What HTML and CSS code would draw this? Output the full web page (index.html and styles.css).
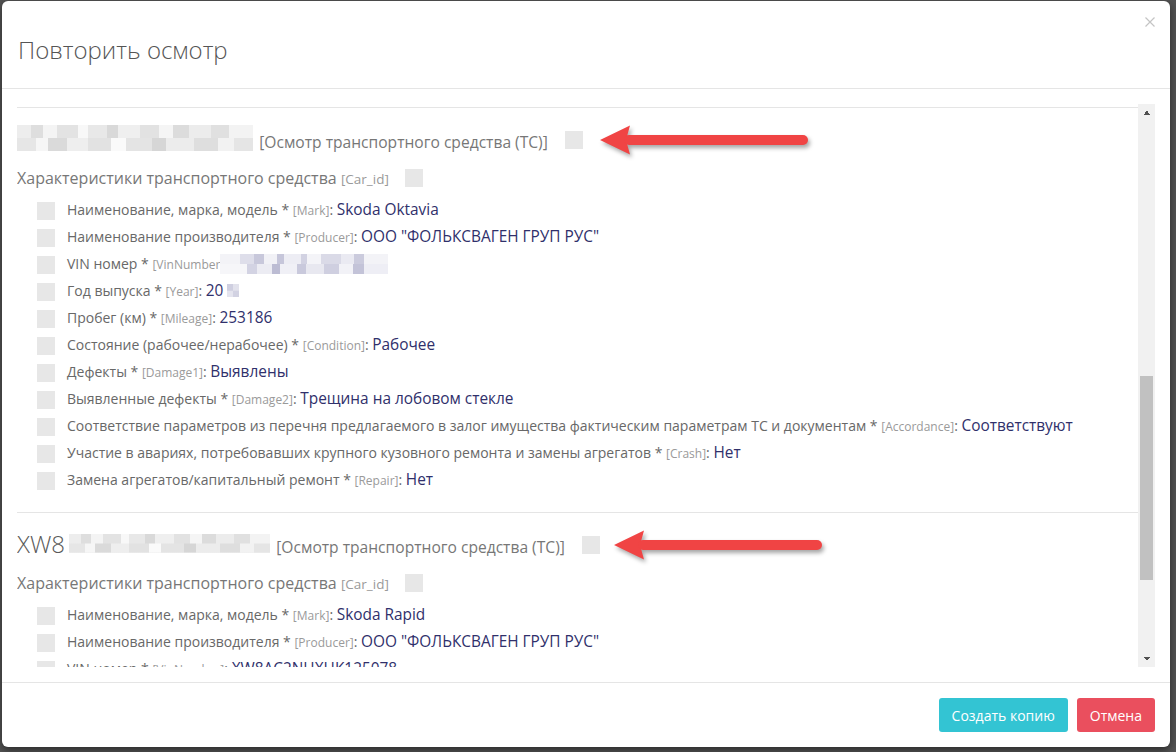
FILE: index.html
```html
<!DOCTYPE html>
<html lang="ru">
<head>
<meta charset="utf-8">
<title>Повторить осмотр</title>
<link rel="stylesheet" href="styles.css">
</head>
<body>
<div class="backdrop">
  <div class="modal">
    <div class="modal-header">
      <h4 class="modal-title">Повторить осмотр</h4>
      <button class="close" type="button" aria-label="Закрыть">
        <svg width="10" height="10" viewBox="0 0 10 10"><path d="M0.5 0.5L9.5 9.5M9.5 0.5L0.5 9.5" stroke="#c4c4c4" stroke-width="1.2" fill="none"/></svg>
      </button>
    </div>
    <div class="modal-body">
      <div class="scroll-area">
        <div class="viewport">
          <div class="block">
            <div class="block-title">
              <span class="title-text"><span class="mosaic m-name1"></span> <span class="kind">[Осмотр транспортного средства (ТС)]</span></span>
              <span class="cb cb-title"></span>
              <svg class="arrow" width="214" height="36" viewBox="0 0 214 36"><path d="M2 18L32 3.5L28 18L32 32.5Z" fill="#f04444"/><rect x="26" y="13" width="184" height="10" rx="5" fill="#f04444"/></svg>
            </div>
            <div class="group"><span class="group-name">Характеристики транспортного средства <span class="tag tag-group">[Car_id]</span></span><span class="cb cb-group"></span></div>
            <ul class="items">
              <li><span class="cb"></span><span class="label">Наименование, марка, модель * <span class="tag">[Mark]</span>: <span class="val">Skoda Oktavia</span></span></li>
              <li><span class="cb"></span><span class="label">Наименование производителя * <span class="tag">[Producer]</span>: <span class="val">ООО "ФОЛЬКСВАГЕН ГРУП РУС"</span></span></li>
              <li><span class="cb"></span><span class="label">VIN номер * <span class="tag">[VinNumber</span><span class="mosaic m-vin"></span></span></li>
              <li><span class="cb"></span><span class="label">Год выпуска * <span class="tag">[Year]</span>: <span class="val">20</span><span class="mosaic m-year"></span></span></li>
              <li><span class="cb"></span><span class="label">Пробег (км) * <span class="tag">[Mileage]</span>: <span class="val">253186</span></span></li>
              <li><span class="cb"></span><span class="label">Состояние (рабочее/нерабочее) * <span class="tag">[Condition]</span>: <span class="val">Рабочее</span></span></li>
              <li><span class="cb"></span><span class="label">Дефекты * <span class="tag">[Damage1]</span>: <span class="val">Выявлены</span></span></li>
              <li><span class="cb"></span><span class="label">Выявленные дефекты * <span class="tag">[Damage2]</span>: <span class="val">Трещина на лобовом стекле</span></span></li>
              <li><span class="cb"></span><span class="label">Соответствие параметров из перечня предлагаемого в залог имущества фактическим параметрам ТС и документам * <span class="tag">[Accordance]</span>: <span class="val">Соответствуют</span></span></li>
              <li><span class="cb"></span><span class="label">Участие в авариях, потребовавших крупного кузовного ремонта и замены агрегатов * <span class="tag">[Crash]</span>: <span class="val">Нет</span></span></li>
              <li><span class="cb"></span><span class="label">Замена агрегатов/капитальный ремонт * <span class="tag">[Repair]</span>: <span class="val">Нет</span></span></li>
            </ul>
          </div>
          <div class="block">
            <div class="block-title">
              <span class="title-text">XW8<span class="mosaic m-name2"></span> <span class="kind">[Осмотр транспортного средства (ТС)]</span></span>
              <span class="cb cb-title"></span>
              <svg class="arrow arrow-2" width="214" height="36" viewBox="0 0 214 36"><path d="M2 18L32 3.5L28 18L32 32.5Z" fill="#f04444"/><rect x="26" y="13" width="184" height="10" rx="5" fill="#f04444"/></svg>
            </div>
            <div class="group"><span class="group-name">Характеристики транспортного средства <span class="tag tag-group">[Car_id]</span></span><span class="cb cb-group"></span></div>
            <ul class="items">
              <li><span class="cb"></span><span class="label">Наименование, марка, модель * <span class="tag">[Mark]</span>: <span class="val">Skoda Rapid</span></span></li>
              <li><span class="cb"></span><span class="label">Наименование производителя * <span class="tag">[Producer]</span>: <span class="val">ООО "ФОЛЬКСВАГЕН ГРУП РУС"</span></span></li>
              <li><span class="cb"></span><span class="label">VIN номер * <span class="tag">[VinNumber]</span>: <span class="val">XW8AC2NHXHK125078</span></span></li>
              <li><span class="cb"></span><span class="label">Год выпуска * <span class="tag">[Year]</span>: <span class="val">2017</span></span></li>
              <li><span class="cb"></span><span class="label">Пробег (км) * <span class="tag">[Mileage]</span>: <span class="val">98412</span></span></li>
            </ul>
          </div>
        </div>
        <div class="scrollbar">
          <div class="sb-btn sb-up"></div>
          <div class="sb-track"><div class="sb-thumb"></div></div>
          <div class="sb-btn sb-down"></div>
        </div>
      </div>
    </div>
    <div class="modal-footer">
      <button class="btn btn-info" type="button">Создать копию</button>
      <button class="btn btn-danger" type="button">Отмена</button>
    </div>
  </div>
</div>
</body>
</html>
```
FILE: styles.css
```css
* { box-sizing: border-box; }
html, body { margin: 0; padding: 0; }
body {
  background: #535353;
  font-family: "Open Sans", "Noto Sans", sans-serif;
  color: #666;
  width: 1176px;
  height: 752px;
  overflow: hidden;
}
.backdrop {
  padding: 1px 6px 0 2px;
}
.modal {
  width: 1168px;
  height: 746px;
  background: #fff;
  border-radius: 6px;
  box-shadow: 0 3px 9px rgba(0, 0, 0, 0.5);
  display: flex;
  flex-direction: column;
  overflow: hidden;
}
.modal-header {
  height: 88px;
  flex: none;
  border-bottom: 1px solid #e5e5e5;
  padding: 0 15px;
  display: flex;
  justify-content: space-between;
  align-items: flex-start;
}
.modal-title {
  margin: 37px 0 0 1px;
  font-size: 24px;
  line-height: 24px;
  font-weight: 300;
  color: #555;
}
.close {
  margin-top: 16px;
  padding: 0;
  border: 0;
  background: none;
  width: 10px;
  height: 10px;
  display: block;
}
.close svg { display: block; }
.modal-body {
  flex: none;
  height: 593px;
  padding: 15px;
}
.scroll-area {
  height: 563px;
  display: flex;
}
.viewport {
  flex: 1;
  overflow: hidden;
  padding-top: 3px;
}
.block {
  border-top: 1px solid #e5e5e5;
  padding: 16px 0 18px;
}
.block-title {
  height: 32px;
  display: flex;
  align-items: center;
}
.title-text {
  font-size: 24px;
  line-height: 32px;
  font-weight: 300;
  color: #5a5a5a;
  white-space: nowrap;
}
.kind {
  font-size: 15.6px;
  font-weight: 400;
  color: #777;
}
.cb {
  flex: none;
  display: block;
  width: 18px;
  height: 18px;
  background: #e7e7e7;
}
.cb-title { margin-left: 17px; }
.arrow {
  flex: none;
  margin-left: 15px;
  overflow: visible;
  filter: drop-shadow(2px 3px 2px rgba(0, 0, 0, 0.35));
}
.arrow-2 { margin-left: 12px; }
.group {
  margin-top: 8px;
  height: 28px;
  display: flex;
  align-items: center;
}
.group-name {
  font-size: 16px;
  color: #777;
  white-space: nowrap;
}
.cb-group { margin-left: 16px; }
.tag {
  font-size: 12px;
  color: #9a9a9a;
}
.tag-group { font-size: 13.5px; }
.items {
  list-style: none;
  margin: 5px 0 0;
  padding: 0;
}
.items li {
  height: 27px;
  display: flex;
  align-items: center;
  padding-left: 20px;
}
.items .cb { margin-right: 12px; }
.label {
  font-size: 14px;
  line-height: 20px;
  color: #686868;
  white-space: nowrap;
}
.val {
  font-size: 15.4px;
  color: #30306b;
}
.mosaic {
  display: inline-block;
  vertical-align: -3px;
  background-color: #efefef;
  background-repeat: no-repeat;
  background-size: 100% 50%, 100% 50%;
  background-position: 0 0, 0 100%;
  background-image:
    linear-gradient(90deg, #ededed 0 6%, #dedede 6% 11%, #f4f4f4 11% 17%, #e3e3e3 17% 26%, #f8f8f8 26% 30%, #e8e8e8 30% 38%, #d9d9d9 38% 43%, #efefef 43% 52%, #e2e2e2 52% 60%, #f5f5f5 60% 66%, #dcdcdc 66% 73%, #ececec 73% 82%, #e0e0e0 82% 90%, #f3f3f3 90%),
    linear-gradient(90deg, #e6e6e6 0 8%, #f6f6f6 8% 13%, #dadada 13% 21%, #eeeeee 21% 30%, #e2e2e2 30% 40%, #fafafa 40% 46%, #e4e4e4 46% 57%, #d6d6d6 57% 63%, #ececec 63% 75%, #dedede 75% 85%, #f2f2f2 85% 92%, #e5e5e5 92%);
}
.m-name1 { width: 236px; height: 26px; }
.m-name2 { width: 201px; height: 19px; margin-left: 4px; vertical-align: 0; }
.m-vin {
  width: 168px;
  height: 20px;
  vertical-align: -5px;
  background-color: #ececf3;
  background-image:
    linear-gradient(90deg, #f3f3f7 0 12%, #dedeea 12% 20%, #c8c8db 20% 26%, #f1f1f6 26% 34%, #c6c6da 34% 38%, #ededf4 38% 48%, #d2d2e2 48% 52%, #f4f4f8 52% 60%, #dadae7 60% 72%, #eaeaf2 72% 80%, #cbcbdd 80% 86%, #f3f3f7 86%),
    linear-gradient(90deg, #f6f6f9 0 16%, #d3d3e3 16% 22%, #ececf3 22% 31%, #bcbcd3 31% 36%, #f0f0f6 36% 46%, #c9c9dc 46% 51%, #e8e8f0 51% 62%, #cfcfe0 62% 71%, #f2f2f7 71% 79%, #c3c3d8 79% 86%, #eeeef5 86%);
}
.m-year {
  width: 12px;
  height: 13px;
  margin-left: 4px;
  vertical-align: -1px;
  background-color: #d9d9e6;
  background-image:
    linear-gradient(90deg, #cfcfe0 0 50%, #e2e2ec 50%),
    linear-gradient(90deg, #e4e4ee 0 50%, #d2d2e2 50%);
}
.scrollbar {
  flex: none;
  width: 17px;
  display: flex;
  flex-direction: column;
  background: #f1f1f1;
}
.sb-btn {
  flex: none;
  height: 17px;
  background-repeat: no-repeat;
  background-size: 4px 4px;
}
.sb-up {
  background-image:
    linear-gradient(to top left, #505050 50%, rgba(80,80,80,0) 50%),
    linear-gradient(to top right, #505050 50%, rgba(80,80,80,0) 50%);
  background-position: 5px 7px, 9px 7px;
}
.sb-down {
  background-image:
    linear-gradient(to bottom left, #505050 50%, rgba(80,80,80,0) 50%),
    linear-gradient(to bottom right, #505050 50%, rgba(80,80,80,0) 50%);
  background-position: 5px 7px, 9px 7px;
}
.sb-track {
  flex: 1;
  padding: 255px 2px 0;
}
.sb-thumb {
  height: 204px;
  background: #c1c1c1;
}
.modal-footer {
  flex: none;
  border-top: 1px solid #e5e5e5;
  padding: 15px;
  display: flex;
  justify-content: flex-end;
  gap: 9px;
}
.btn {
  height: 34px;
  padding: 0 13px;
  border: 0;
  border-radius: 3px;
  font-family: "Open Sans", "Noto Sans", sans-serif;
  font-size: 14px;
  color: #fff;
}
.btn-info { background: #33c4d3; }
.btn-danger { background: #ea4f5e; }
```
